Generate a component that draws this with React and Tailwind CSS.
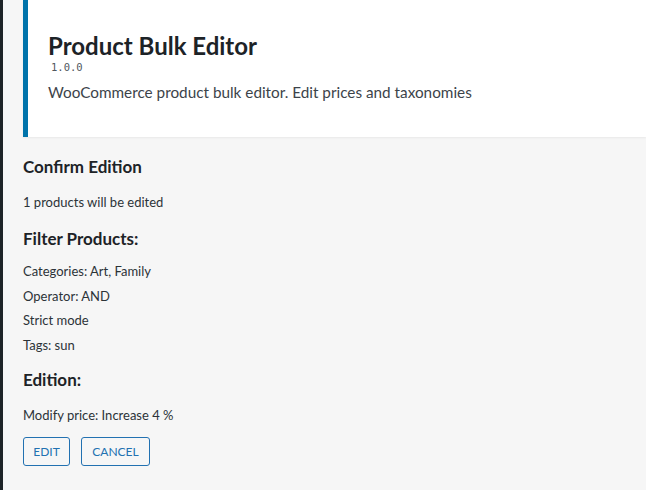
import React from "react";

const font = { fontFamily: 'Lato, "Noto Sans", sans-serif' };

const filters = ["Categories: Art, Family", "Operator: AND", "Strict mode", "Tags: sun"];

const App = () => {
  return (
    <div className="flex min-h-[490px] w-full bg-[#f6f6f6]" style={font}>
      {/* admin menu edge */}
      <div className="w-[3px] shrink-0 bg-[#1d2327]" />

      <div className="flex-1 pl-[20px]">
        {/* Plugin header card */}
        <header className="h-[137px] border-l-[5px] border-[#0073aa] bg-white pl-[20px] pt-[32px] shadow-[0_1px_2px_rgba(0,0,0,0.06)]">
          <h1 className="text-[24px] font-bold leading-[28px] text-[#1d2327]">Product Bulk Editor</h1>
          <div className="pl-[3px] font-['DejaVu_Sans_Mono',monospace] text-[10.5px] leading-[14px] text-[#50575e]">1.0.0</div>
          <p className="mt-[7px] text-[15.3px] leading-[22px] text-[#3c434a]">
            WooCommerce product bulk editor. Edit prices and taxonomies
          </p>
        </header>

        <main className="pt-[19px] text-[13px] text-[#2c3338]">
          <h2 className="text-[17px] font-bold leading-[22px] text-[#1d2327]">Confirm Edition</h2>
          <p className="mt-[14px] leading-[20px]">1 products will be edited</p>

          <h2 className="mt-[16px] text-[17px] font-bold leading-[22px] text-[#1d2327]">Filter Products:</h2>
          <ul className="mt-[11px] flex flex-col gap-[4.5px] leading-[20px]">
            {filters.map((f) => (
              <li key={f}>{f}</li>
            ))}
          </ul>

          <h2 className="mt-[14px] text-[17px] font-bold leading-[22px] text-[#1d2327]">Edition:</h2>
          <p className="mt-[14px] leading-[20px]">Modify price: Increase 4 %</p>

          <div className="mt-[12px] flex gap-[11px]">
            <button className="h-[29px] w-[47px] rounded-[3px] border border-[#2271b1] pt-px text-[12px] text-[#2271b1]">
              EDIT
            </button>
            <button className="h-[29px] w-[69px] rounded-[3px] border border-[#2271b1] pt-px text-[12px] text-[#2271b1]">
              CANCEL
            </button>
          </div>
        </main>
      </div>
    </div>
  );
};

export default App;
